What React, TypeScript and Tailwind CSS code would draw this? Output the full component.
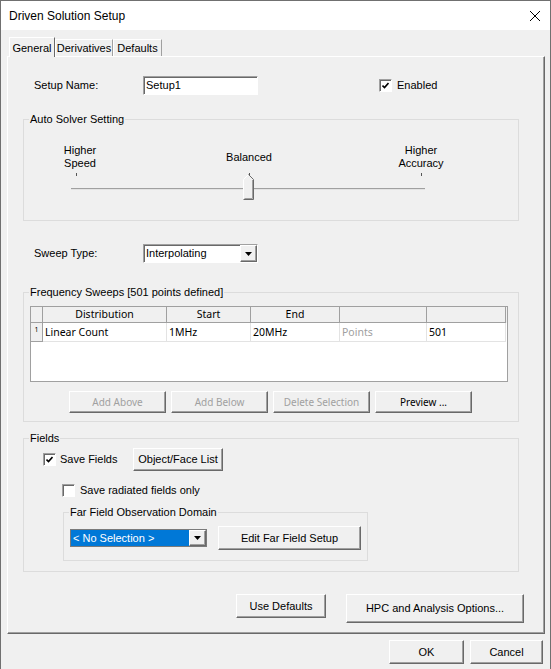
import React from 'react';

const arial = "font-['Liberation_Sans',Arial,sans-serif]";
const tahoma = "font-['Noto_Sans',Tahoma,sans-serif]";

const raised =
  'bg-[#f0f0f0] border border-t-white border-l-white border-r-[#696969] border-b-[#696969] shadow-[inset_-1px_-1px_0_#a0a0a0]';
const sunken =
  'bg-white border border-t-[#a0a0a0] border-l-[#a0a0a0] border-r-white border-b-white shadow-[inset_1px_1px_0_#696969]';

const Btn = ({
  label,
  w,
  h = 'h-[22px]',
  disabled = false,
  font = arial,
  cls = 'text-[11px]',
}: {
  label: string;
  w: string;
  h?: string;
  disabled?: boolean;
  font?: string;
  cls?: string;
}) => (
  <button
    className={`${raised} ${w} ${h} ${font} ${cls} flex items-center justify-center ${
      disabled ? 'text-[#a0a0a0]' : 'text-black'
    }`}
  >
    {label}
  </button>
);

const Check = ({ checked, cls = '' }: { checked: boolean; cls?: string }) => (
  <span className={`${sunken} ${cls} w-[13px] h-[13px] flex items-center justify-center shrink-0`}>
    {checked && (
      <svg width="7" height="7" viewBox="0 0 7 7">
        <path d="M0.5 3.5 L2.5 5.5 L6.5 1" stroke="#000" strokeWidth="1.6" fill="none" />
      </svg>
    )}
  </span>
);

const Arrow = () => (
  <span className={`${raised} w-[17px] h-full flex items-center justify-center shrink-0`}>
    <svg width="7" height="4" viewBox="0 0 7 4">
      <path d="M0 0 H7 L3.5 4 Z" fill="#000" />
    </svg>
  </span>
);

const Group = ({
  title,
  cls,
  children,
}: {
  title: string;
  cls: string;
  children?: React.ReactNode;
}) => (
  <fieldset className={`border border-[#dcdcdc] shrink-0 ${cls}`}>
    <legend className="ml-[5px] px-[1px] leading-[14px] text-[11px]">{title}</legend>
    {children}
  </fieldset>
);

const cols = [
  { w: 'w-[12px]', head: '' },
  { w: 'w-[124px]', head: 'Distribution' },
  { w: 'w-[84px]', head: 'Start' },
  { w: 'w-[89px]', head: 'End' },
  { w: 'w-[87px]', head: '' },
  { w: 'w-[79px]', head: '' },
];

const row = ['1', 'Linear Count', '1MHz', '20MHz', 'Points', '501'];

const Slider = () => (
  <svg width="494" height="28" className="block mt-[3px]">
    {/* ticks */}
    <line x1="52.5" y1="0" x2="52.5" y2="3" stroke="#555" />
    <line x1="225.5" y1="0" x2="225.5" y2="3" stroke="#555" />
    <line x1="397.5" y1="0" x2="397.5" y2="3" stroke="#555" />
    {/* track */}
    <line x1="47" y1="15.5" x2="401" y2="15.5" stroke="#a0a0a0" />
    <line x1="47" y1="16.5" x2="401" y2="16.5" stroke="#e3e3e3" />
    {/* thumb */}
    <path d="M219.5 26.5 V6.5 L224.5 1.5 L229.5 6.5 V26.5 Z" fill="#f0f0f0" />
    <path d="M219.5 26.5 V6.5 L224.5 1.5" stroke="#fff" fill="none" />
    <path d="M224.5 1.5 L229.5 6.5 V26.5 H219.5" stroke="#696969" fill="none" />
    <path d="M228.5 7 V25.5 H220.5" stroke="#a0a0a0" fill="none" />
  </svg>
);

export default function App() {
  return (
    <div
      className={`w-[551px] h-[669px] bg-[#f0f0f0] border-x border-t border-[#707070] flex flex-col overflow-hidden text-black text-[11px] ${arial}`}
    >
      {/* title bar */}
      <div className="h-[29px] bg-white flex items-center justify-between pl-[8px] pr-[10px] shrink-0">
        <span className="text-[12px]">Driven Solution Setup</span>
        <svg width="10" height="10" viewBox="0 0 10 10">
          <path d="M0 0 L10 10 M10 0 L0 10" stroke="#000" strokeWidth="1" />
        </svg>
      </div>

      <div className="flex flex-col pl-[6px]">
        {/* tabs */}
        <div className="flex items-end h-[19px] mt-[7px] ml-[2px]">
          <div className="relative z-10 -mb-[1px] h-[20px] w-[46px] bg-[#f0f0f0] border-t border-l border-t-white border-l-white border-r border-r-[#696969] flex items-start justify-center pt-[2px]">
            General
          </div>
          <div className="h-[17px] w-[58px] border-t border-l border-t-white border-l-white border-r border-r-[#a0a0a0] flex items-center justify-center">
            Derivatives
          </div>
          <div className="h-[17px] w-[49px] border-t border-l border-t-white border-l-white border-r border-r-[#a0a0a0] flex items-center justify-center">
            Defaults
          </div>
        </div>

        {/* tab panel */}
        <div className="w-[538px] h-[578px] border border-t-white border-l-white border-r-[#696969] border-b-[#696969] shadow-[inset_-1px_-1px_0_#a0a0a0] flex flex-col">
          {/* setup name */}
          <div className="mt-[19px] h-[19px] flex items-center">
            <span className="w-[135px] pl-[26px]">Setup Name:</span>
            <div className={`${sunken} w-[115px] h-[19px] pl-[2px] flex items-center`}>Setup1</div>
            <Check checked cls="ml-[121px]" />
            <span className="ml-[5px]">Enabled</span>
          </div>

          {/* auto solver */}
          <Group title="Auto Solver Setting" cls="mt-[17px] ml-[15px] w-[496px] h-[109px]">
            <div className="mt-[18px] flex items-center leading-[13px]">
              <div className="ml-[24px] w-[64px] text-center">
                Higher
                <br />
                Speed
              </div>
              <div className="ml-[105px] w-[64px] text-center">Balanced</div>
              <div className="ml-[108px] w-[64px] text-center">
                Higher
                <br />
                Accuracy
              </div>
            </div>
            <Slider />
          </Group>

          {/* sweep type */}
          <div className="mt-[23px] h-[19px] flex items-center">
            <span className="w-[135px] pl-[26px]">Sweep Type:</span>
            <div className={`${sunken} w-[115px] h-[19px] flex items-stretch`}>
              <span className="flex-1 pl-[2px] flex items-center">Interpolating</span>
              <Arrow />
            </div>
          </div>

          {/* frequency sweeps */}
          <Group title="Frequency Sweeps [501 points defined]" cls="mt-[22px] ml-[15px] w-[496px] h-[137px]">
            <div className={`mt-[7px] ml-[6px] w-[478px] h-[76px] bg-white border border-[#a0a0a0] ${tahoma} text-[10.5px]`}>
              <div className="flex h-[16px] bg-[#f0f0f0]">
                {cols.map((c, i) => (
                  <div
                    key={i}
                    className={`${c.w} h-full border-r border-b border-[#a0a0a0] flex items-center justify-center leading-none`}
                  >
                    {c.head}
                  </div>
                ))}
              </div>
              <div className="flex h-[19px]">
                {cols.map((c, i) => (
                  <div
                    key={i}
                    className={`${c.w} h-full border-r border-b flex items-center leading-none ${
                      i === 0
                        ? 'bg-[#f0f0f0] border-[#a0a0a0] justify-center text-[7px] items-start pt-[3px]'
                        : 'border-[#e3e3e3] pl-[2px]'
                    } ${i === 4 ? 'text-[#a0a0a0]' : ''}`}
                  >
                    {row[i]}
                  </div>
                ))}
              </div>
            </div>
            <div className="mt-[9px] ml-[45px] flex gap-[5px]">
              <Btn label="Add Above" w="w-[97px]" disabled font={tahoma} cls="text-[10px]" />
              <Btn label="Add Below" w="w-[97px]" disabled font={tahoma} cls="text-[10px]" />
              <Btn label="Delete Selection" w="w-[97px]" disabled font={tahoma} cls="text-[10px]" />
              <Btn label="Preview ..." w="w-[97px]" font={tahoma} cls="text-[10px]" />
            </div>
          </Group>

          {/* fields */}
          <Group title="Fields" cls="mt-[9px] ml-[15px] w-[496px] h-[141px]">
            <div className="mt-[3px] h-[23px] flex items-center">
              <Check checked cls="ml-[19px]" />
              <span className="ml-[4px] w-[73px]">Save Fields</span>
              <Btn label="Object/Face List" w="w-[90px]" h="h-[23px]" />
            </div>
            <div className="mt-[13px] h-[13px] flex items-center">
              <Check checked={false} cls="ml-[38px]" />
              <span className="ml-[5px]">Save radiated fields only</span>
            </div>
            <Group title="Far Field Observation Domain" cls="mt-[8px] ml-[39px] w-[305px] h-[56px]">
              <div className="mt-[7px] h-[24px] flex items-center">
                <div className="ml-[6px] w-[137px] h-[18px] bg-white border border-[#7a7a7a] flex items-stretch">
                  <span className="flex-1 bg-[#0078d7] text-white pl-[2px] flex items-center">
                    &lt; No Selection &gt;
                  </span>
                  <Arrow />
                </div>
                <Btn label="Edit Far Field Setup" w="w-[143px]" h="h-[24px]" cls="ml-[11px] text-[11px]" />
              </div>
            </Group>
          </Group>

          {/* bottom of panel */}
          <div className="mt-[22px] flex items-start">
            <Btn label="Use Defaults" w="w-[90px]" h="h-[24px]" cls="ml-[228px] text-[11px]" />
            <Btn label="HPC and Analysis Options..." w="w-[178px]" h="h-[29px]" cls="ml-[20px] text-[11px]" />
          </div>
        </div>

        {/* dialog buttons */}
        <div className="mt-[6px] flex">
          <Btn label="OK" w="w-[75px]" h="h-[24px]" cls="ml-[382px] text-[11px]" />
          <Btn label="Cancel" w="w-[73px]" h="h-[24px]" cls="ml-[6px] text-[11px]" />
        </div>
      </div>
    </div>
  );
}
